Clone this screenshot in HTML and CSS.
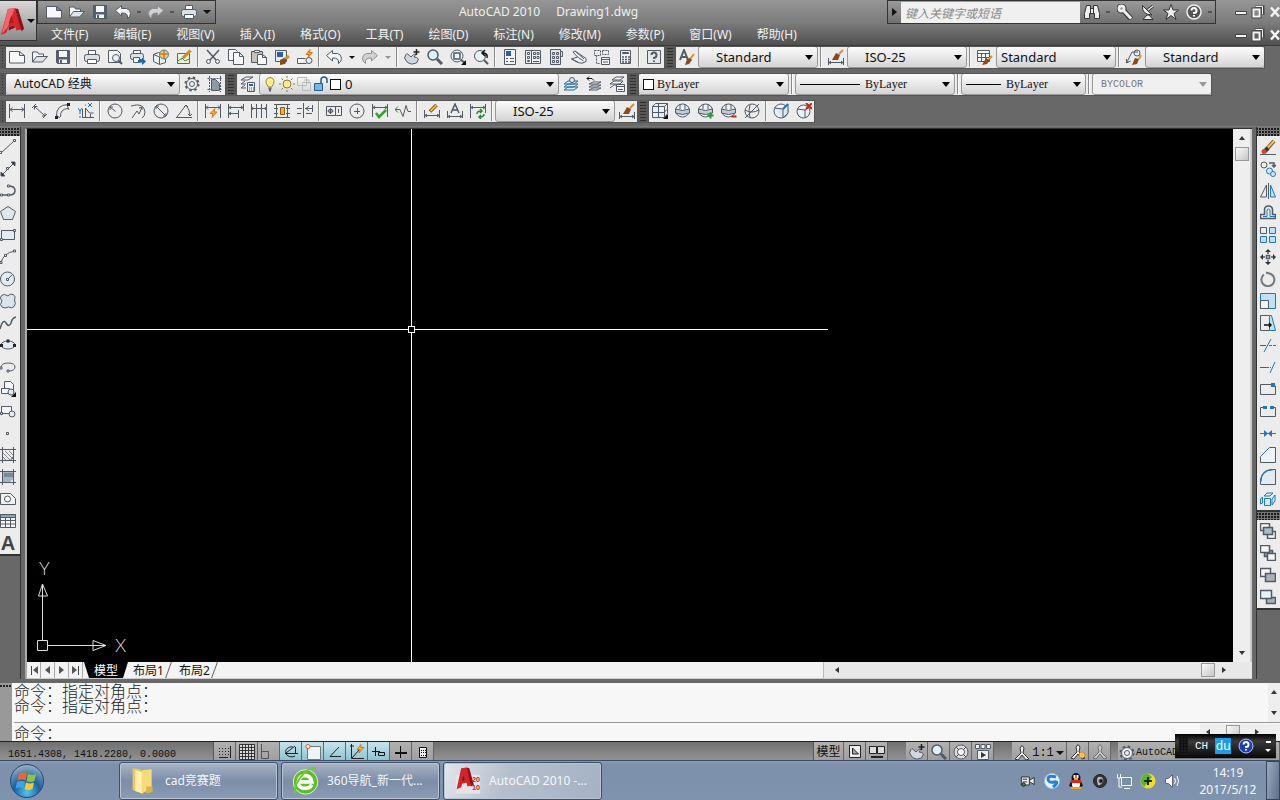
FILE: index.html
```html
<!DOCTYPE html>
<html lang="zh-CN">
<head>
<meta charset="utf-8">
<title>AutoCAD 2010 Drawing1.dwg</title>
<link rel="stylesheet" href="styles.css">
</head>
<body>
<svg class="sprite" aria-hidden="true">
  <symbol id="new" viewBox="0 0 16 16"><path fill="#f6f8fa" d="M.5 2.500h10l5 4v7.500H.5zM10.500 2.500v4h5"/></symbol>
  <symbol id="open" viewBox="0 0 16 16"><path fill="#f6f8fa" d="M.5 13V3h5l1 2h5v2.500"/><path fill="#dfe4ea" d="M.5 13l4-5.500h11l-5 5.500z"/></symbol>
  <symbol id="save" viewBox="0 0 16 16"><path fill="#566072" d="M1.500 1.500h13v13h-12l-1-1z"/><path fill="#f6f8fa" stroke="none" d="M4 2h8v6H4zM4 10.500h8V14H4z"/><path fill="#566072" stroke="none" d="M5 11h2v3H5z"/></symbol>
  <symbol id="print" viewBox="0 0 16 16"><path fill="#fff" d="M4.500 6V1.500h7V6"/><rect x=".5" y="5.500" width="15" height="7" rx="2" fill="#dde1e6"/><path fill="#fff" d="M3.500 10.500h9v4h-9z"/></symbol>
  <symbol id="preview" viewBox="0 0 16 16"><path fill="#f6f8fa" d="M1.500 1.500h9l3 3v9h-12z"/><circle cx="9" cy="9" r="3.500" fill="#e8f2fa"/><path stroke-width="2" d="M11.500 11.500l3.500 3.500"/></symbol>
  <symbol id="publish" viewBox="0 0 16 16"><path fill="#fff" d="M3.500 5V1.500h7V5"/><rect x=".5" y="4.500" width="13" height="6" rx="2" fill="#dde1e6"/><path fill="#fff" d="M3.500 8.500h6v5h-6z"/><path fill="#1566b8" stroke="none" d="M8 11h4V8.500l4 4-4 3.500v-2.500H8z"/></symbol>
  <symbol id="dwf" viewBox="0 0 16 16"><path fill="#eef3f7" d="M.5 5.500l5-2 7 2v8l-6 2-6-3zM.5 5.500l6 2.500v7"/><circle cx="11" cy="5.500" r="4.500" fill="#f2d24a" stroke="#3b83c4"/><path stroke="#d04f2a" d="M11 1v9M7 5h8"/></symbol>
  <symbol id="markup" viewBox="0 0 16 16"><path fill="#e9f2dc" stroke="#5f6b52" d="M1.500 4.500h12v10h-12z"/><path stroke="#4a9a38" d="M2 12l4-3 3 3 4-2"/><path stroke="#d28a22" stroke-width="3" d="M7 9l7.500-7.500"/><path d="M5.500 10.500l2-2"/></symbol>
  <symbol id="cut" viewBox="0 0 16 16"><path stroke-width="1.500" d="M2 1l9 10M14 1L5 11"/><circle cx="3.500" cy="12.500" r="2"/><circle cx="12.500" cy="12.500" r="2"/></symbol>
  <symbol id="copyclip" viewBox="0 0 16 16"><path fill="#f8f9fb" d="M5.500 11.500h-5V.5h7l2 2"/><path fill="#f8f9fb" d="M5.500 3.500h6l4 4v8h-10zM11.500 3.500v4h4"/></symbol>
  <symbol id="paste" viewBox="0 0 16 16"><path fill="#c9c3b8" d="M.5 2.500h11v11H.5z"/><path fill="#fff" d="M3.500 1.500h5v2h-5z"/><path fill="#f8f9fb" d="M6.500 5.500h5l4 3v7h-9zM11.500 5.500v3h4"/></symbol>
  <symbol id="match" viewBox="0 0 16 16"><path fill="#e8eef4" d="M1.500 1.500h11v11h-11z"/><path fill="#2c5f9d" stroke="none" d="M3 3h6v5H3z"/><path stroke="#d8902a" stroke-width="3" d="M11 10l4-3"/><path fill="#8a4a1c" stroke="none" d="M6 11l4-2 3 2-2 4-5 1z"/></symbol>
  <symbol id="blockedit" viewBox="0 0 16 16"><path fill="#f6f8fa" d="M.5 14.500v-5h8"/><circle cx="12" cy="11.500" r="3" fill="#e8eef4"/><path d="M.5 14.500h9"/><path fill="#f5a623" stroke="#d6771a" d="M13 .5l-4 5h3l-1 3 4.500-5h-3z"/></symbol>
  <symbol id="undo" viewBox="0 0 16 16"><path fill="#f4f6f8" d="M.5 6.500L6.500 1.500v3h5q4 1 4 5 0 3-3 5 1-6-6-5.500v3z"/></symbol>
  <symbol id="redo" viewBox="0 0 16 16"><path fill="#d0d2d4" stroke="#8c8f93" d="M15.500 6.500L9.500 1.500v3h-5q-4 1-4 5 0 3 3 5-1-6 6-5.500v3z"/></symbol>
  <symbol id="pan" viewBox="0 0 16 16"><path fill="#d0d7de" d="M2 5.500L.5 9l3 4.500q4 3 9 .500l2-4Q13 8 10 8L12 5 9.500 5.500 7 8 3 4.500z"/><path stroke="#222" stroke-width="1.500" d="M12.500 0v6M9.500 3h6"/></symbol>
  <symbol id="zoom" viewBox="0 0 16 16"><circle cx="6" cy="6" r="5" fill="#dff0f7" stroke-width="1.500"/><path stroke-width="3" d="M10 10l5 5"/></symbol>
  <symbol id="zoomwin" viewBox="0 0 16 16"><circle cx="7" cy="7" r="6" fill="#eaf3f8"/><path stroke-width="1.500" d="M4 4h6v6H4z"/><path stroke-width="2" d="M11 11l4 3"/><path fill="#111" stroke="none" d="M16 11v5h-5z"/></symbol>
  <symbol id="zoomprev" viewBox="0 0 16 16"><circle cx="7" cy="7" r="5.500" fill="#eaf3f8"/><path stroke-width="2" d="M11 11l4 4"/><path stroke="#111" stroke-width="1.500" d="M14 9q1-5-4-5M12 1L9 4l3 3"/></symbol>
  <symbol id="props" viewBox="0 0 16 16"><path fill="#eef2f5" d="M2.500.5h11v15h-11z"/><path fill="#2c5f9d" stroke="none" d="M4 2h5v5H4z"/><path d="M4 9.500h2M8 9.500h4M4 12.500h2M8 12.500h4"/></symbol>
  <symbol id="dc" viewBox="0 0 16 16"><path fill="#eef2f5" d="M.5 1.500h15v13H.5zM6.500 1.500v13"/><path d="M2.500 3.500h2v2h-2zM2.500 7.500h2v2h-2zM2.500 11.500h2v1h-2zM8.500 3.500h2v2h-2zM12 3.500h2v2h-2zM8.500 7.500h2v2h-2zM12 7.500h2v2h-2zM8 12.500h6"/></symbol>
  <symbol id="palette" viewBox="0 0 16 16"><path fill="#dfe5ea" d="M2.500.5h10v15h-10zM12.500 2.500h2v5h-2"/><path d="M4.500 3.500h2v2h-2zM8.500 3.500h2v2h-2zM4.500 7.500h2v2h-2zM8.500 7.500h2v2h-2zM4.500 11.500h2v2h-2zM8.500 11.500h2v2h-2z"/></symbol>
  <symbol id="sheet" viewBox="0 0 16 16"><path fill="#eef2f5" d="M.5 10l6-2L2 3l2-1 11 7.500v3q-4 3-8 1zM.5 10l6.500 3M6.500 8l6 4M4 2l9 8"/></symbol>
  <symbol id="msm" viewBox="0 0 16 16"><path stroke-dasharray="2 1" d="M.5 1.500h6v5h-6zM8.500 1.500h6v4h-6zM2.500 6.500v8h4"/><path fill="#f6f8fa" d="M7.500 8.500h8v7h-8zM7.500 10.500h8M9 13h5"/></symbol>
  <symbol id="calc" viewBox="0 0 16 16"><path fill="#eef2f5" d="M3.500 1.500h10v13h-10z"/><path fill="#566072" d="M5.500 3.500h6v1h-6z"/><path stroke-dasharray="2 1" stroke-width="1.500" d="M5 8h8M5 10.500h8M5 13h8"/></symbol>
  <symbol id="help" viewBox="0 0 16 16"><path fill="#e4e8ed" d="M1.500 1.500h13v13h-13z"/><path stroke-width="2" d="M5.500 6q0-2.500 2.500-2.500T10.500 6 8 9v1M8 11.500v1.500"/></symbol>
  <symbol id="tstyle" viewBox="0 0 16 16"><path stroke-width="2" d="M1 11L5 1l4 10M3 8h4"/><path stroke="#d8902a" stroke-width="2" d="M11 10l4-5"/><path fill="#8a4a1c" stroke="none" d="M8 10l3-1 2 2-3 4-4 1z"/></symbol>
  <symbol id="dstyle" viewBox="0 0 16 16"><path d="M.5 9v7M15.500 9v7M1 13.500h14M3 12l-2 1.500L3 15M13 12l2 1.500-2 1.500"/><path stroke="#d8902a" stroke-width="2" d="M11 5l4-4"/><path fill="#8a4a1c" stroke="none" d="M8 4l4 2-2 5H4z"/></symbol>
  <symbol id="tbstyle" viewBox="0 0 16 16"><path fill="#f8fafb" d="M.5 1.500h12v11H.5zM.5 4.500h12M.5 8.500h12M4.500 4v8M8.500 4v8"/><path stroke="#d8902a" stroke-width="2" d="M12 10l3-3"/><path fill="#8a4a1c" stroke="none" d="M9 9l4 2-3 4-5 1z"/></symbol>
  <symbol id="mlstyle" viewBox="0 0 16 16"><path d="M.5 14L6 3h6M.5 14l0-4M.5 14l4-2"/><circle cx="11" cy="4" r="3"/><path stroke="#d8902a" stroke-width="2" d="M13 10l2-4"/><path fill="#8a4a1c" stroke="none" d="M9 9l4 1-2 5-5 1z"/></symbol>
  <symbol id="gear" viewBox="0 0 16 16"><circle cx="8" cy="8" r="6.500" stroke-width="2" stroke-dasharray="2.500 2.600"/><circle cx="8" cy="8" r="5.500" fill="#eef0f2"/><circle cx="8" cy="8" r="2.500"/></symbol>
  <symbol id="wsave" viewBox="0 0 16 16"><path stroke-dasharray="2 1" d="M.5 2.500h15M.5 13.500h15M2.500 0v16M13.500 0v16"/><path fill="#8e99a5" d="M4.500 3.500h4l4 4v7h-8z"/></symbol>
  <symbol id="layers" viewBox="0 0 16 16"><path fill="#f4f6f8" d="M1 4l5-3h7L8 4zM1 8l4-3M1 12l4-3M1 8h5M1 12h5"/><path fill="#e8eef4" d="M7.500 6.500h7v9h-7z"/><path fill="#2c5f9d" stroke="none" d="M9 8h4v2H9z"/><path stroke-dasharray="1 1" d="M9 12h5M9 14h5"/></symbol>
  <symbol id="bulb" viewBox="0 0 16 16"><path fill="#ffee8a" stroke="#a08a30" d="M6.500 11Q3.500 8 4 4.500 5 1.500 8 1.500t4 3Q12.500 8 9.500 11z"/><path stroke="#666" stroke-width="2" d="M6.500 12.500h3M7 14.500h2"/></symbol>
  <symbol id="sun" viewBox="0 0 16 16"><circle cx="8" cy="8" r="4" fill="#ffe98a" stroke="#8a7a40"/><path stroke="#8a7a40" d="M8 0v2M8 14v2M0 8h2M14 8h2M2.500 2.500L4 4M12 12l1.500 1.500M2.500 13.500L4 12M12 4l1.500-1.500"/></symbol>
  <symbol id="vpfreeze" viewBox="0 0 16 16"><path stroke="#b8bcc0" d="M1.500 1.500h9v8h-9zM6.500 6.500h8v8h-8zM8 4h5v4"/></symbol>
  <symbol id="lock" viewBox="0 0 16 16"><path fill="#75b6e6" stroke="#265b8c" d="M1.500 7.500h8v7h-8z"/><path stroke="#265b8c" stroke-width="1.500" d="M8 7V4q0-3 3-3t3 3v3"/></symbol>
  <symbol id="laycur" viewBox="0 0 16 16"><path fill="#d5ecf8" stroke="#2a6ea6" d="M1 8l4-3h10l-4 3zM1 11l4-3h10l-4 3zM1 14l4-3h10l-4 3z"/><circle cx="9" cy="4" r="2.500" fill="#d5ecf8"/></symbol>
  <symbol id="layprev" viewBox="0 0 16 16"><path fill="#f4f6f8" d="M3 8l4-2h8l-4 2zM3 11l4-2h8l-4 2zM3 14l4-2h8l-4 2z"/><path stroke="#111" d="M1 2.500h5l2 2M3 .5l-2 2 2 2"/></symbol>
  <symbol id="laystate" viewBox="0 0 16 16"><path fill="#f4f6f8" d="M3 4l4-3h8l-4 3zM1 8l4-3h9l-3 3zM1 12l4-3h3"/><path fill="#f6f8fa" d="M7.500 8.500h8v7h-8zM7.500 10.500h8M9 13.500h5"/></symbol>
  <symbol id="dlin" viewBox="0 0 16 16"><path d="M.5 1v14M15.500 1v14M1 6.500h14M3.500 4.500l-2.500 2 2.500 2M12.500 4.500l2.500 2-2.500 2"/></symbol>
  <symbol id="dali" viewBox="0 0 16 16"><path d="M0 5l4-4M11 15l4-4M2.500 3.500L13 13M2.500 6.500v-3h3M13 10v3h-3"/></symbol>
  <symbol id="darc" viewBox="0 0 16 16"><path d="M1.500 13Q1 2 13 1.500M5.500 14Q5 6 13 5.500M1 12l4 3M12 2l2 5"/><path fill="#222" stroke="none" d="M0 13h3v3H0zM12 0h3v3h-3z"/></symbol>
  <symbol id="dord" viewBox="0 0 16 16"><path d="M4.500 6v9M4 14.500h12M7.500 14V5l4 5h4M12.500 14v-3"/><path stroke="#1677c8" d="M0 5l2 3 2-3M2 8v3M10 0l4 4M14 0l-4 4M1 14h2M7 2h1"/></symbol>
  <symbol id="drad" viewBox="0 0 16 16"><circle cx="8" cy="8" r="7"/><path d="M8.500 8.500L3 4M3 7V4h3"/></symbol>
  <symbol id="djog" viewBox="0 0 16 16"><path d="M1 3Q14-1 15 9q0 4-3 6M2 15l5-7 2 3 3-7M9 5l3-1v3"/></symbol>
  <symbol id="ddia" viewBox="0 0 16 16"><circle cx="8" cy="8" r="7"/><path d="M3 3l10 10M3 6V3h3M13 10v3h-3"/></symbol>
  <symbol id="dang" viewBox="0 0 16 16"><path d="M0 14.500h16M1 14L10 2M10 2q4 5 4 11M8 4l2-2 2 2M12 11l2 2 2-2"/></symbol>
  <symbol id="dquick" viewBox="0 0 16 16"><path d="M.5 1v14M15.500 1v14M1 4.500h14M3 2.500L1 4.500l2 2M13 2.500l2 2-2 2"/><path fill="#ffb02e" stroke="#d6771a" d="M10 5.500l-5 5h3l-1 4 5-5.500H9z"/></symbol>
  <symbol id="dbase" viewBox="0 0 16 16"><path d="M.5 1v14M1 4.500h14M15.500 1v7M1 10.500h9M10.500 7v8M3 3L1 4.500 3 6M3 9l-2 1.500L3 12M13 3l2 1.500L13 6"/></symbol>
  <symbol id="dcont" viewBox="0 0 16 16"><path d="M.5 1v14M5.500 1v14M10.500 1v14M15.500 1v14M1 5.500h15M2 4l-1 1.500L2 7M14 4l1 1.500L14 7"/></symbol>
  <symbol id="dspace" viewBox="0 0 16 16"><path d="M0 1.500h16M0 14.500h16M2.500 2v12M13.500 2v12M0 5.500h4M12 5.500h4M0 10.500h4M12 10.500h4"/><path fill="#ffb02e" stroke="#8a5a10" d="M6.500 4.500h4v7h-4z"/></symbol>
  <symbol id="dbreak" viewBox="0 0 16 16"><path d="M6.500 0v15M0 10.500h4M9 10.500h6M0 5.500h5M8 5.500h7M15.500 2v7M12 3l-3 2.500L12 8"/></symbol>
  <symbol id="tol" viewBox="0 0 16 16"><path d="M.5 3.500h15v9H.5zM9.500 3.500v9M12.500 6v4M1.500 8h6M4.500 5v6"/><circle cx="4.500" cy="8" r="2"/></symbol>
  <symbol id="cmark" viewBox="0 0 16 16"><circle cx="8" cy="8" r="7"/><path d="M5 8.500h6M8.500 5v6"/></symbol>
  <symbol id="inspect" viewBox="0 0 16 16"><path d="M.5 1v13M15.500 1v13M1 4.500h14M3 3L1 4.500 3 6M13 3l2 1.500L13 6"/><path stroke="#35a02e" stroke-width="2.500" d="M4 10l3 4 7-7"/></symbol>
  <symbol id="jogline" viewBox="0 0 16 16"><path d="M0 6.500h5l3 7 3-11 2 6h3M3 3.500l-3 3 3 3"/></symbol>
  <symbol id="dedit" viewBox="0 0 16 16"><path d="M.5 7v8M15.500 7v8M1 12.500h14M3 11l-2 1.500L3 14M13 11l2 1.500-2 1.500"/><path stroke="#7a4a10" stroke-width="3.500" d="M6 8.500L12.500 2"/><path stroke="#f3b33c" stroke-width="2" d="M6.500 8l6-6"/></symbol>
  <symbol id="dtedit" viewBox="0 0 16 16"><path d="M.5 8v7M15.500 8v7M1 13.500h14M3 12l-2 1.500L3 15M13 12l2 1.500-2 1.500"/><path stroke-width="1.500" d="M4 10l4-9 4 9M5.500 7h5"/></symbol>
  <symbol id="dupd" viewBox="0 0 16 16"><path d="M.5 1v14M15.500 1v9M1 4.500h14M3 3L1 4.500 3 6M13 3l2 1.500L13 6"/><path stroke="#278a32" stroke-width="1.500" d="M7 11q0-3 4-3M10 6l2 2-2 2M14 11q0 3-4 3M11 12l-2 2 2 2"/></symbol>
  <symbol id="box3" viewBox="0 0 16 16"><path fill="#eaf0f4" d="M.5 3.500l3-3h12v10l-3 4H.5zM.5 3.500h12v11M12.500 3.500l3-3M6.500 0v14M0 9.500h12l3-3"/><path fill="#111" stroke="none" d="M16 11v5h-5z"/></symbol>
  <symbol id="ball" viewBox="0 0 16 16"><ellipse cx="7.500" cy="7.500" rx="7" ry="6.500" fill="#eaf0f4"/><path fill="#c3ccd4" d="M.5 6q7 3 14 0v4q-7 3-14 0z"/><path d="M5 1.500v4.500M10 1.500v4.500"/></symbol>
  <symbol id="balladd" viewBox="0 0 16 16"><use href="#ball"/><path stroke="#1f9a28" stroke-width="2" d="M9.500 12.500h6M12.500 9.500v6"/></symbol>
  <symbol id="ballsub" viewBox="0 0 16 16"><use href="#ball"/><path stroke="#c8201a" stroke-width="2" d="M10.500 13.500h5"/></symbol>
  <symbol id="wire" viewBox="0 0 16 16"><circle cx="8" cy="8" r="7"/><path d="M1 7q7 4 14 0M6 1.500q-2 6 0 13M1 15L15 1"/></symbol>
  <symbol id="cubeball" viewBox="0 0 16 16"><circle cx="8" cy="8" r="7" fill="#eaf0f4"/><path fill="#d8e9f4" d="M1 5l9 1v9M10 6l5-5v9l-5 5"/><path stroke="#2076c0" stroke-width="2" d="M10 6l5-5"/></symbol>
  <symbol id="cubex" viewBox="0 0 16 16"><circle cx="7.500" cy="8.500" r="6.500" fill="#eaf0f4"/><path d="M1 6l8 1v8M9 7l5-3"/><path stroke="#d3201c" stroke-width="2" d="M10 0l6 6M16 0l-6 6"/></symbol>
  <symbol id="line" viewBox="0 0 16 16"><path d="M1 14L14 2"/><path fill="#eee" d="M-.5 12.500h2v2h-2zM13.500.5h2v2h-2z"/></symbol>
  <symbol id="xline" viewBox="0 0 16 16"><path d="M1 15L15 1"/><path fill="#222" d="M11 1h4v4zM1 11v4h4z"/><path fill="#eee" d="M6.500 6.500h2v2h-2z"/></symbol>
  <symbol id="pline" viewBox="0 0 16 16"><path stroke-width="1.500" d="M8 3q7 0 7 4.500T9 12H1"/><path fill="#eee" d="M7.500 2h2v2h-2zM.5 11h2v2h-2zM7.500 11h2v2h-2z"/></symbol>
  <symbol id="poly" viewBox="0 0 16 16"><path fill="#e0e7ee" d="M8 1.500l7.500 5-3 8h-9l-3-8z"/></symbol>
  <symbol id="rect" viewBox="0 0 16 16"><path fill="#e3ebf2" d="M1.500 3.500h13v9h-13z"/><path fill="#eee" d="M.5 11.500h2v2h-2zM13.500 2.500h2v2h-2z"/></symbol>
  <symbol id="arc" viewBox="0 0 16 16"><path d="M1 14Q3 4 15 2"/><path fill="#eee" d="M0 12.500h2v2H0zM4.500 5.500h2v2h-2zM13.500 1h2v2h-2z"/></symbol>
  <symbol id="circ" viewBox="0 0 16 16"><circle cx="7.500" cy="8" r="7" fill="#e3ebf2"/><path d="M8 8l4-4"/><path fill="#eee" d="M6.500 7.500h2v2h-2z"/></symbol>
  <symbol id="cloud" viewBox="0 0 16 16"><path fill="#dbe4ec" d="M8 3Q10 0 13 1.500T14.500 7Q16.500 11 14 13.500T8.500 14Q5 16 2 14T2 8Q-1 5 1.500 2.500T8 3z"/></symbol>
  <symbol id="spl" viewBox="0 0 16 16"><path stroke-width="1.500" d="M0 14Q3 3 6 8t5 0q1-5 5-6"/></symbol>
  <symbol id="ell" viewBox="0 0 16 16"><ellipse cx="8" cy="8" rx="7" ry="4" fill="#e3ebf2"/><path fill="#222" stroke="none" d="M0 7h3v3H0zM6.500 2.500h3v3h-3zM13 7h3v3h-3z"/></symbol>
  <symbol id="ella" viewBox="0 0 16 16"><path d="M1 9q0-5 7-5t7 4-7 4"/><path fill="#eee" d="M0 8h2v2H0zM7 11h2v2H7z"/></symbol>
  <symbol id="ins" viewBox="0 0 16 16"><path fill="#f6f8fa" d="M4.500 7V.5h6l3 3V12M1.500 7.500h8v5h-8z"/><circle cx="11" cy="11" r="3" fill="#e3ebf2"/><path fill="#111" stroke="none" d="M16 11v5h-5z"/></symbol>
  <symbol id="blk" viewBox="0 0 16 16"><path fill="#f6f8fa" d="M1.500 3.500h10v7h-10z"/><circle cx="12" cy="11" r="3" fill="#e3ebf2"/><path fill="#eee" d="M.5 9.500h2v2h-2z"/></symbol>
  <symbol id="pt" viewBox="0 0 16 16"><path d="M6.500 7.500h2v2h-2z"/></symbol>
  <symbol id="hatch" viewBox="0 0 16 16"><path d="M0 2.500h16M0 13.500h16M2.500 0v16M13.500 0v16"/><path stroke="#7d8691" d="M5 4l8 8M9 4l4 4M3 6l7 7M3 10l3 3"/><path d="M13 10l-3 4"/></symbol>
  <symbol id="grad" viewBox="0 0 16 16"><path d="M0 2.500h16M0 13.500h16M2.500 0v16M13.500 0v16"/><path fill="#a8b2be" stroke="none" d="M3 3h10v7l-3 3H3z"/><path fill="#7b8898" stroke="none" d="M4 4h9v4H4z"/></symbol>
  <symbol id="reg" viewBox="0 0 16 16"><path fill="#f0f4f7" d="M.5 2.500h10l5 5v6H.5z"/><circle cx="7.500" cy="8" r="3" fill="#fff"/></symbol>
  <symbol id="tbl" viewBox="0 0 16 16"><path fill="#f8fafb" d="M.5 1.500h15v13H.5zM.5 7.500h15M.5 11h15M5.500 4v10M10.500 4v10"/><path fill="#8fa3b7" d="M.5 1.500h15v3H.5z"/></symbol>
  <symbol id="erase" viewBox="0 0 16 16"><path d="M0 15.500h16"/><path stroke="#8a5a20" stroke-width="4" d="M6 11l8-9"/><path stroke="#efbe6a" stroke-width="2" d="M7 9.500L14 2"/><path stroke="#333" stroke-width="4" d="M5 12l3-3"/><circle cx="4" cy="12.500" r="2.500" fill="#d9481e" stroke="none"/></symbol>
  <symbol id="copy" viewBox="0 0 16 16"><circle cx="4" cy="4" r="3" fill="#eee"/><g fill="#d3ebfa" stroke="#2076c0"><circle cx="9.500" cy="10" r="3"/><circle cx="13" cy="13" r="2.500"/></g><path stroke-width="1.500" d="M9 2h5v4M12 4l2 2 2-2"/></symbol>
  <symbol id="mirror" viewBox="0 0 16 16"><path d="M6.500 2v12h-6z"/><path d="M8.500 0v16"/><path fill="#bfe2f8" stroke="#2076c0" d="M10.500 2v12h5z"/></symbol>
  <symbol id="offset" viewBox="0 0 16 16"><path stroke-width="1.500" d="M.5 13.500v-4h4V5q0-4 4-4t4 4v4.500h3v4z"/><path stroke="#2076c0" d="M3 11.500h4V6q0-2 1.500-2T10 6v5.500h5"/></symbol>
  <symbol id="array" viewBox="0 0 16 16"><path d="M.5.500h6v6h-6z"/><path fill="#bfe2f8" stroke="#2076c0" d="M9.500.500h6v6h-6zM.5 9.500h6v6h-6zM9.500 9.500h6v6h-6z"/></symbol>
  <symbol id="move" viewBox="0 0 16 16"><path stroke-width="1.500" d="M8 1v4M8 11v4M1 8h4M11 8h4M6.500 6.500h3v3h-3z"/><path fill="#333" stroke="none" d="M5 3l3-3 3 3zM5 13l3 3 3-3zM3 5L0 8l3 3zM13 5l3 3-3 3z"/></symbol>
  <symbol id="rotate" viewBox="0 0 16 16"><path stroke="#707880" stroke-width="2" d="M4 3.500a6.500 6.500 0 1 0 7-.500M11 3L6 1.500"/></symbol>
  <symbol id="scale" viewBox="0 0 16 16"><path fill="#bfe2f8" stroke="#2076c0" d="M.5.5h15v15H.5z"/><path fill="#f4f4f4" d="M.5 7.500h8v8h-8z"/></symbol>
  <symbol id="stretch" viewBox="0 0 16 16"><path d="M9.500 15.500h-9V.5h9"/><path fill="#bfe2f8" stroke="#2076c0" d="M9.500.5h2l4 15h-6z"/><path stroke="#111" stroke-width="1.500" d="M4 10h7M9 8l2 2-2 2"/></symbol>
  <symbol id="trim" viewBox="0 0 16 16"><path d="M0 8.500h6"/><path stroke="#2076c0" d="M4 15l7-13"/><path stroke="#2076c0" stroke-dasharray="3 1" d="M9 8.500h7"/></symbol>
  <symbol id="extend" viewBox="0 0 16 16"><path d="M0 8.500h6"/><path stroke="#2076c0" stroke-dasharray="3 1" d="M6 8.500h5"/><path stroke="#2076c0" d="M10 14l5-11"/></symbol>
  <symbol id="brkpt" viewBox="0 0 16 16"><path d="M15.500 5v8.500H.5v-10H12"/><path fill="#2076c0" stroke="none" d="M11 2h4v4h-4z"/></symbol>
  <symbol id="brk" viewBox="0 0 16 16"><path d="M4 4.500H.5v9h15v-9H12"/><path fill="#2076c0" stroke="none" d="M3 3h4v3H3zM10 3h4v3h-4z"/></symbol>
  <symbol id="join" viewBox="0 0 16 16"><path stroke="#2076c0" d="M0 8.500h16"/><path fill="#2076c0" stroke="none" d="M4 5l4 3.500L4 12zM12 5L8 8.500 12 12z"/></symbol>
  <symbol id="cham" viewBox="0 0 16 16"><path fill="#f0f4f7" d="M9.500.5h6v15H.5v-6"/><path stroke="#2076c0" d="M.5 9.500l9-9"/></symbol>
  <symbol id="fillet" viewBox="0 0 16 16"><path fill="#e3ebf2" d="M13 .5h2.500v15H.5V13Q1 1 13 .5z"/><path stroke="#2076c0" stroke-width="1.500" d="M.5 13Q1 1 13 .5"/></symbol>
  <symbol id="explode" viewBox="0 0 16 16"><path fill="#d3ebfa" stroke="#2076c0" d="M4.500 7.500h6v7h-6zM4 5l3-3h6l-3 3zM12 8l3-4v6l-3 4zM2.500 6L.5 8v5l2-1z"/></symbol>
  <symbol id="ord1" viewBox="0 0 16 16"><path fill="#f6f6f6" stroke-width="1.500" d="M.5.500h9v7h-9zM7.500 8.500h8v7h-8z"/><path fill="#a9bac8" stroke-width="1.500" d="M3.500 4.500h9v7h-9z"/></symbol>
  <symbol id="ord2" viewBox="0 0 16 16"><path fill="#8fa3b7" stroke-width="1.500" d="M4.500 5.500h8v6h-8z"/><path fill="#f6f6f6" stroke-width="1.500" d="M.5.500h9v7h-9zM7.500 8.500h8v7h-8z"/></symbol>
  <symbol id="ord3" viewBox="0 0 16 16"><path fill="#f6f6f6" stroke-width="1.500" d="M.5 1.500h10v8H.5z"/><path fill="#a9b0b6" stroke-width="1.500" d="M5.500 6.500h10v8h-10z"/></symbol>
  <symbol id="ord4" viewBox="0 0 16 16"><path fill="#a9b0b6" stroke-width="1.500" d="M6.500 8.500h9v6h-9z"/><path fill="#e8f2f8" stroke-width="1.500" d="M.5 1.500h11v8H.5z"/></symbol>
  <symbol id="bino" viewBox="0 0 16 16"><path fill="#eee" stroke="#333" d="M2.500 1.500h4v3h3v-3h4l2 8v5h-5v-5h-5v5h-5v-5zM6.500 4v6M9.500 4v6"/></symbol>
  <symbol id="key" viewBox="0 0 16 16"><circle cx="4.500" cy="4.500" r="3" stroke="#333" stroke-width="4"/><path stroke="#333" stroke-width="5" d="M7 7l7 8"/><circle cx="4.500" cy="4.500" r="2.500" stroke="#eee" stroke-width="3"/><path stroke="#eee" stroke-width="3" d="M6 6l8 8.500"/></symbol>
  <symbol id="dish" viewBox="0 0 16 16"><path fill="#eee" stroke="#333" d="M2.500 1.500q-1 9 9.500 9.500zM3 15.500h10l-4-4.500H7z"/><path stroke="#333" stroke-width="3" d="M8 6l5-4"/><path stroke="#eee" stroke-width="1.500" d="M8 6l5-4"/></symbol>
  <symbol id="star" viewBox="0 0 16 16"><path fill="#eee" stroke="#333" d="M8 .5l2 5.500h5.500L11 9.500l2 6-5-4-5 4 2-6L.5 6H6z"/></symbol>
  <symbol id="helpc" viewBox="0 0 16 16"><circle cx="8" cy="8" r="7" fill="#555" stroke="#eee" stroke-width="1.500"/><path stroke="#fff" stroke-width="2" d="M5.500 6.500q0-2.500 2.500-2.500t2.500 2.500T8 9v.8M8 11v1.500"/></symbol>
  <symbol id="min" viewBox="0 0 14 14"><path fill="#f4f4f4" stroke="#444" d="M1.500 6.500h11v3h-11z"/></symbol>
  <symbol id="max" viewBox="0 0 14 14"><path stroke="#444" stroke-width="3" d="M2 4h7v8H2zM4 2h8v8"/><path stroke="#f4f4f4" stroke-width="2" d="M2.500 4.500h6v7h-6z"/><path stroke="#f4f4f4" d="M4.500 1.500h7v8"/></symbol>
  <symbol id="close" viewBox="0 0 14 14"><path stroke="#f4f4f4" stroke-width="2.500" d="M3 2.500l8 9M11 2.500l-8 9"/></symbol>
  <symbol id="sdots" viewBox="0 0 16 16"><path stroke="#222" stroke-dasharray="1 2" d="M2 4.500h10M2 7.500h10M2 10.500h10"/><path stroke="#222" d="M13.500 2v12M2 13.500h9"/></symbol>
  <symbol id="sgrid" viewBox="0 0 16 16"><path fill="#ddd" stroke="#333" d="M.5.500h15v15H.5zM3.500 0v16M6.500 0v16M9.500 0v16M12.500 0v16M0 3.500h16M0 6.500h16M0 9.500h16M0 12.500h16"/></symbol>
  <symbol id="sortho" viewBox="0 0 16 16"><path stroke="#555" d="M.5 0v14.500h7v-7H1"/></symbol>
  <symbol id="spolar" viewBox="0 0 16 16"><path stroke="#222" d="M3 9l9-7M2 9.500h13M12.500 3v6M12 12a6 5 0 1 1-2-9"/></symbol>
  <symbol id="sosnap" viewBox="0 0 16 16"><path fill="#eef4f6" stroke="#777" d="M2.500 2.500h13v13h-13z"/><circle cx="3" cy="2.500" r="2" fill="#fff" stroke="#e0571a"/></symbol>
  <symbol id="sotrack" viewBox="0 0 16 16"><path stroke="#222" d="M12 3L3 12.500h11"/></symbol>
  <symbol id="sducs" viewBox="0 0 16 16"><path stroke="#222" d="M2.500 0v14.500H15M3 14l7-8M1 2h4"/><path fill="#ffb02e" stroke="#d6771a" d="M12 .5l-4 5h3l-1 3.500 5-5.500h-3z"/></symbol>
  <symbol id="sdyn" viewBox="0 0 16 16"><path stroke="#111" d="M1 7.500h8M4.500 3v9M7.500 8.500h6v3h-6z"/></symbol>
  <symbol id="slwt" viewBox="0 0 16 16"><path stroke="#111" d="M7.500 2v12"/><path stroke="#111" stroke-width="2" d="M2 9h12"/></symbol>
  <symbol id="sqp" viewBox="0 0 16 16"><path fill="#eee" stroke="#111" d="M4.500 3.500h7v10h-7z"/><path stroke="#111" stroke-dasharray="1 1" d="M6 6.500h5M6 8.500h5M6 11.500h5"/></symbol>
  <symbol id="smodel" viewBox="0 0 16 16"><path fill="#eee" stroke="#222" d="M2.500 1.500h11v12h-11zM5.500 4v6h6z"/></symbol>
  <symbol id="slay" viewBox="0 0 16 16"><path fill="#ddd" stroke="#222" d="M.5 2.500h7v7h-7zM8.500 2.500h7v7h-7z"/><path stroke="#222" stroke-width="2" d="M2 13h12"/></symbol>
  <symbol id="wheel" viewBox="0 0 16 16"><circle cx="8" cy="8" r="7" fill="#ddd"/><circle cx="8" cy="8" r="3.500" fill="#fff"/><path d="M3 3l3 3M13 3l-3 3M3 13l3-3M13 13l-3-3"/></symbol>
  <symbol id="motion" viewBox="0 0 16 16"><path fill="#eee" d="M.5.500h4v4h-4zM6 .5h4v4H6zM11.500.5h4v4h-4zM2.500 6.500h11v9h-11z"/><path fill="#333" stroke="none" d="M6 8l5 3-5 3z"/></symbol>
  <symbol id="ann" viewBox="0 0 16 16"><path fill="#eee" stroke="#333" d="M8 .5l2 2.500-1 5 6 6-3 1-4-5-4 5-3-1 6-6-1-5z"/></symbol>
  <symbol id="annsun" viewBox="0 0 16 16"><use href="#ann"/><circle cx="12" cy="11" r="3" fill="#ffc24a" stroke="#e08a20"/></symbol>
  <symbol id="logoA" viewBox="0 0 28 34"><path fill="#d9262b" stroke="none" d="M8 3l8-1 8 25-6 1-2-6-7 2-3 7-6 2z"/><path fill="#8d1117" stroke="none" d="M16 2l4 1 7 23-3 3zM9 24l7-2v3l-7 3z"/><path fill="#f3656a" stroke="none" d="M8 3l8-1-8 22-7 8z"/><path fill="#b01b20" stroke="none" d="M12 10l3 9-6 1z"/></symbol>
</svg>

<header class="titlebar">
  <button class="app" aria-label="应用程序菜单"><svg class="logo"><use href="#logoA"/></svg><i class="caret"></i></button>
  <div class="titlerows">
    <div class="titlerow">
      <div class="qat">
        <button aria-label="新建"><svg><use href="#new"/></svg></button><button aria-label="打开"><svg><use href="#open"/></svg></button><button aria-label="保存"><svg><use href="#save"/></svg></button><button aria-label="放弃"><svg><use href="#undo"/></svg></button><i class="tick"></i><button aria-label="重做"><svg><use href="#redo"/></svg></button><i class="tick"></i><button aria-label="打印"><svg><use href="#print"/></svg></button><button class="slim" aria-label="自定义"><i class="caret"></i></button>
      </div>
      <h1 class="title"><span>AutoCAD 2010</span><span>Drawing1.dwg</span></h1>
      <div class="info">
        <button class="slim" aria-label="展开"><i class="tri-r"></i></button>
        <input type="text" aria-label="搜索" placeholder="键入关键字或短语">
        <button aria-label="搜索"><svg><use href="#bino"/></svg></button><i class="tick"></i><button aria-label="速博"><svg><use href="#key"/></svg></button><button aria-label="通讯"><svg><use href="#dish"/></svg></button><button aria-label="收藏"><svg><use href="#star"/></svg></button><button aria-label="帮助"><svg><use href="#helpc"/></svg></button><i class="tick"></i>
      </div>
      <div class="winbtns"><button aria-label="最小化"><svg><use href="#min"/></svg></button><button aria-label="还原"><svg><use href="#max"/></svg></button><button aria-label="关闭"><svg><use href="#close"/></svg></button></div>
    </div>
    <div class="titlerow">
      <nav class="menu"><a href="#">文件(F)</a><a href="#">编辑(E)</a><a href="#">视图(V)</a><a href="#">插入(I)</a><a href="#">格式(O)</a><a href="#">工具(T)</a><a href="#">绘图(D)</a><a href="#">标注(N)</a><a href="#">修改(M)</a><a href="#">参数(P)</a><a href="#">窗口(W)</a><a href="#">帮助(H)</a></nav>
      <div class="winbtns"><button aria-label="最小化图形"><svg><use href="#min"/></svg></button><button aria-label="还原图形"><svg><use href="#max"/></svg></button><button aria-label="关闭图形"><svg><use href="#close"/></svg></button></div>
    </div>
  </div>
</header>

<section class="bars">
  <div class="barrow">
    <i class="grip edge"></i>
    <div class="bar">
      <button aria-label="新建"><svg><use href="#new"/></svg></button><button aria-label="打开"><svg><use href="#open"/></svg></button><button aria-label="保存"><svg><use href="#save"/></svg></button><i class="sep"></i>
      <button aria-label="打印"><svg><use href="#print"/></svg></button><button aria-label="打印预览"><svg><use href="#preview"/></svg></button><button aria-label="发布"><svg><use href="#publish"/></svg></button><button aria-label="三维DWF"><svg><use href="#dwf"/></svg></button><button aria-label="标记"><svg><use href="#markup"/></svg></button><i class="sep"></i>
      <button aria-label="剪切"><svg><use href="#cut"/></svg></button><button aria-label="复制"><svg><use href="#copyclip"/></svg></button><button aria-label="粘贴"><svg><use href="#paste"/></svg></button><button aria-label="特性匹配"><svg><use href="#match"/></svg></button><button aria-label="块编辑器"><svg><use href="#blockedit"/></svg></button><i class="sep"></i>
      <button aria-label="放弃"><svg><use href="#undo"/></svg></button><button class="drop" aria-label="放弃列表"><i class="caret small"></i></button><button aria-label="重做"><svg><use href="#redo"/></svg></button><button class="drop dim" aria-label="重做列表"><i class="caret small"></i></button><i class="sep"></i>
      <button aria-label="平移"><svg><use href="#pan"/></svg></button><button aria-label="缩放"><svg><use href="#zoom"/></svg></button><button aria-label="窗口缩放"><svg><use href="#zoomwin"/></svg></button><button aria-label="上一个"><svg><use href="#zoomprev"/></svg></button><i class="sep"></i>
      <button aria-label="特性"><svg><use href="#props"/></svg></button><button aria-label="设计中心"><svg><use href="#dc"/></svg></button><button aria-label="工具选项板"><svg><use href="#palette"/></svg></button><button aria-label="图纸集"><svg><use href="#sheet"/></svg></button><button aria-label="标记集"><svg><use href="#msm"/></svg></button><button aria-label="计算器"><svg><use href="#calc"/></svg></button><i class="sep"></i>
      <button aria-label="帮助"><svg><use href="#help"/></svg></button>
    </div>
    <i class="grip"></i>
    <div class="bar">
      <button aria-label="文字样式"><svg><use href="#tstyle"/></svg></button>
      <div class="combo w120 inset"><select aria-label="文字样式"><option>Standard</option></select></div><i class="sep"></i>
      <button aria-label="标注样式"><svg><use href="#dstyle"/></svg></button>
      <div class="combo w120 inset"><select aria-label="标注样式"><option>ISO-25</option></select></div><i class="sep"></i>
      <button aria-label="表格样式"><svg><use href="#tbstyle"/></svg></button>
      <div class="combo w120"><select aria-label="表格样式"><option>Standard</option></select></div><i class="sep"></i>
      <button aria-label="引线样式"><svg><use href="#mlstyle"/></svg></button>
      <div class="combo w120 inset"><select aria-label="引线样式"><option>Standard</option></select></div>
    </div>
  </div>
  <div class="barrow">
    <i class="grip edge"></i>
    <div class="bar">
      <div class="combo w175 ws"><select aria-label="工作空间"><option>AutoCAD 经典</option></select></div>
      <button aria-label="工作空间设置"><svg><use href="#gear"/></svg></button><button aria-label="我的工作空间"><svg><use href="#wsave"/></svg></button>
    </div>
    <i class="grip"></i>
    <div class="bar">
      <button aria-label="图层特性"><svg><use href="#layers"/></svg></button>
      <div class="combo w300"><svg><use href="#bulb"/></svg><svg><use href="#sun"/></svg><svg><use href="#vpfreeze"/></svg><svg><use href="#lock"/></svg><i class="swatch"></i><select aria-label="图层"><option>0</option></select></div>
      <button aria-label="置为当前"><svg><use href="#laycur"/></svg></button><button aria-label="上一个图层"><svg><use href="#layprev"/></svg></button><button aria-label="图层状态"><svg><use href="#laystate"/></svg></button>
    </div>
    <i class="grip"></i>
    <div class="bar">
      <div class="combo w150 serif"><i class="swatch"></i><select aria-label="颜色"><option>ByLayer</option></select></div><i class="sep"></i>
      <div class="combo w160 serif"><i class="rule long"></i><select aria-label="线型"><option>ByLayer</option></select></div><i class="sep"></i>
      <div class="combo w125 serif"><i class="rule"></i><select aria-label="线宽"><option>ByLayer</option></select></div><i class="sep"></i>
      <div class="combo w120 off"><select aria-label="打印样式" disabled><option>BYCOLOR</option></select></div>
    </div>
  </div>
  <div class="barrow">
    <i class="grip edge"></i>
    <div class="bar">
      <button aria-label="线性"><svg><use href="#dlin"/></svg></button><button aria-label="对齐"><svg><use href="#dali"/></svg></button><button aria-label="弧长"><svg><use href="#darc"/></svg></button><button aria-label="坐标"><svg><use href="#dord"/></svg></button><i class="sep"></i>
      <button aria-label="半径"><svg><use href="#drad"/></svg></button><button aria-label="折弯"><svg><use href="#djog"/></svg></button><button aria-label="直径"><svg><use href="#ddia"/></svg></button><button aria-label="角度"><svg><use href="#dang"/></svg></button><i class="sep"></i>
      <button aria-label="快速标注"><svg><use href="#dquick"/></svg></button><button aria-label="基线"><svg><use href="#dbase"/></svg></button><button aria-label="连续"><svg><use href="#dcont"/></svg></button><button aria-label="等距标注"><svg><use href="#dspace"/></svg></button><button aria-label="折断标注"><svg><use href="#dbreak"/></svg></button><i class="sep"></i>
      <button aria-label="公差"><svg><use href="#tol"/></svg></button><button aria-label="圆心标记"><svg><use href="#cmark"/></svg></button><button aria-label="检验"><svg><use href="#inspect"/></svg></button><button aria-label="折弯线性"><svg><use href="#jogline"/></svg></button><i class="sep"></i>
      <button aria-label="编辑标注"><svg><use href="#dedit"/></svg></button><button aria-label="编辑标注文字"><svg><use href="#dtedit"/></svg></button><button aria-label="标注更新"><svg><use href="#dupd"/></svg></button><i class="sep"></i>
      <div class="combo w120 inset"><select aria-label="标注样式控制"><option>ISO-25</option></select></div>
      <button aria-label="标注样式"><svg><use href="#dstyle"/></svg></button>
    </div>
    <i class="grip"></i>
    <div class="bar">
      <button aria-label="长方体"><svg><use href="#box3"/></svg></button><button aria-label="网格"><svg><use href="#ball"/></svg></button><button aria-label="增加平滑"><svg><use href="#balladd"/></svg></button><button aria-label="减少平滑"><svg><use href="#ballsub"/></svg></button><button aria-label="优化"><svg><use href="#wire"/></svg></button><i class="sep"></i>
      <button aria-label="锐化"><svg><use href="#cubeball"/></svg></button><button aria-label="取消锐化"><svg><use href="#cubex"/></svg></button>
    </div>
  </div>
</section>

<main class="work">
  <aside class="side left">
    <i class="hgrip"></i>
    <div class="tools"><button aria-label="直线"><svg><use href="#line"/></svg></button><button aria-label="构造线"><svg><use href="#xline"/></svg></button><button aria-label="多段线"><svg><use href="#pline"/></svg></button><button aria-label="正多边形"><svg><use href="#poly"/></svg></button><button aria-label="矩形"><svg><use href="#rect"/></svg></button><button aria-label="圆弧"><svg><use href="#arc"/></svg></button><button aria-label="圆"><svg><use href="#circ"/></svg></button><button aria-label="修订云线"><svg><use href="#cloud"/></svg></button><button aria-label="样条曲线"><svg><use href="#spl"/></svg></button><button aria-label="椭圆"><svg><use href="#ell"/></svg></button><button aria-label="椭圆弧"><svg><use href="#ella"/></svg></button><button aria-label="插入块"><svg><use href="#ins"/></svg></button><button aria-label="创建块"><svg><use href="#blk"/></svg></button><button aria-label="点"><svg><use href="#pt"/></svg></button><button aria-label="图案填充"><svg><use href="#hatch"/></svg></button><button aria-label="渐变色"><svg><use href="#grad"/></svg></button><button aria-label="面域"><svg><use href="#reg"/></svg></button><button aria-label="表格"><svg><use href="#tbl"/></svg></button><button class="letter">A</button></div>
  </aside>
  <section class="doc">
    <div class="view">
      <div class="canvas">
        <svg class="cross" shape-rendering="crispEdges" aria-hidden="true">
          <path d="M0 200.500h801M384.500 0v197M384.500 204v2000"/><path class="pick" d="M381.500 197.500h6v6h-6z"/>
        </svg>
        <svg class="ucs" viewBox="0 0 110 100">
          <path d="M10.500 82.500h10v10h-10zM15.500 82V27M21 87.500h54"/><path d="M15.500 26l-4 12h9zM15.500 26v12M79 87.500l-13-5v10zM79 87.500H66"/>
          <text x="12" y="17">Y</text><text x="88" y="94">X</text>
        </svg>
      </div>
      <div class="vscroll"><button aria-label="上滚"><i class="tri-u"></i></button><i class="thumb"></i><span class="fill"></span><button aria-label="下滚"><i class="tri-d"></i></button></div>
    </div>
    <div class="tabs">
      <button class="nav" aria-label="第一个"><i class="bar1"></i><i class="tri-l"></i></button><button class="nav" aria-label="前一个"><i class="tri-l"></i></button><button class="nav" aria-label="后一个"><i class="tri-r"></i></button><button class="nav" aria-label="最后一个"><i class="tri-r"></i><i class="bar1"></i></button>
      <button class="tab on">模型</button><button class="tab">布局1</button><button class="tab">布局2</button>
      <span class="fill"></span>
      <div class="hscroll"><button aria-label="左滚"><i class="tri-l"></i></button><span class="fill"></span><i class="thumb"></i><button aria-label="右滚"><i class="tri-r"></i></button></div>
    </div>
  </section>
  <aside class="side right">
    <i class="hgrip"></i>
    <div class="tools"><button aria-label="删除"><svg><use href="#erase"/></svg></button><button aria-label="复制"><svg><use href="#copy"/></svg></button><button aria-label="镜像"><svg><use href="#mirror"/></svg></button><button aria-label="偏移"><svg><use href="#offset"/></svg></button><button aria-label="阵列"><svg><use href="#array"/></svg></button><button aria-label="移动"><svg><use href="#move"/></svg></button><button aria-label="旋转"><svg><use href="#rotate"/></svg></button><button aria-label="缩放"><svg><use href="#scale"/></svg></button><button aria-label="拉伸"><svg><use href="#stretch"/></svg></button><button aria-label="修剪"><svg><use href="#trim"/></svg></button><button aria-label="延伸"><svg><use href="#extend"/></svg></button><button aria-label="打断于点"><svg><use href="#brkpt"/></svg></button><button aria-label="打断"><svg><use href="#brk"/></svg></button><button aria-label="合并"><svg><use href="#join"/></svg></button><button aria-label="倒角"><svg><use href="#cham"/></svg></button><button aria-label="圆角"><svg><use href="#fillet"/></svg></button><button aria-label="分解"><svg><use href="#explode"/></svg></button></div>
    <i class="hgrip"></i>
    <div class="tools"><button aria-label="前置"><svg><use href="#ord1"/></svg></button><button aria-label="后置"><svg><use href="#ord2"/></svg></button><button aria-label="置于上"><svg><use href="#ord3"/></svg></button><button aria-label="置于下"><svg><use href="#ord4"/></svg></button></div>
  </aside>
</main>

<section class="command">
  <i class="cmdgrip"></i>
  <div class="cmdbody">
    <div class="history"><div><p>命令：指定对角点：</p><p>命令：指定对角点：</p></div><span class="hv"><i class="tri-u"></i><i class="tri-d"></i></span></div>
    <div class="prompt"><label for="cmd">命令：</label><input id="cmd" type="text"><span class="ph"><i class="tri-l"></i><i class="thumb"></i><i class="tri-r"></i></span></div>
  </div>
</section>

<footer class="status">
  <span class="coords">1651.4308, 1418.2280, 0.0000</span>
  <button aria-label="捕捉"><svg><use href="#sdots"/></svg></button><button aria-label="栅格"><svg><use href="#sgrid"/></svg></button><button aria-label="正交"><svg><use href="#sortho"/></svg></button><button class="lit" aria-label="极轴"><svg><use href="#spolar"/></svg></button><button class="lit" aria-label="对象捕捉"><svg><use href="#sosnap"/></svg></button><button class="lit" aria-label="对象追踪"><svg><use href="#sotrack"/></svg></button><button class="lit" aria-label="DUCS"><svg><use href="#sducs"/></svg></button><button class="lit" aria-label="DYN"><svg><use href="#sdyn"/></svg></button><button aria-label="线宽"><svg><use href="#slwt"/></svg></button><button aria-label="快捷特性"><svg><use href="#sqp"/></svg></button>
  <span class="fill"></span>
  <button class="txt model">模型</button><button aria-label="模型空间"><svg><use href="#smodel"/></svg></button><button aria-label="快速查看布局"><svg><use href="#slay"/></svg></button><i class="gap"></i>
  <button aria-label="平移"><svg><use href="#pan"/></svg></button><button aria-label="缩放"><svg><use href="#zoom"/></svg></button><button aria-label="控制盘"><svg><use href="#wheel"/></svg></button><button aria-label="运动"><svg><use href="#motion"/></svg></button><i class="gap"></i>
  <button class="txt scalebtn"><svg><use href="#ann"/></svg>1:1<i class="caret"></i></button><button aria-label="注释可见性"><svg><use href="#annsun"/></svg></button><button class="faded" aria-label="自动添加比例"><svg><use href="#ann"/></svg></button><i class="gap thin"></i>
  <button class="txt wsbtn"><svg><use href="#gear"/></svg>AutoCAD 经典</button>
  <div class="ime"><i class="hgrip"></i><span>CH</span><b>du</b><svg viewBox="0 0 16 16"><circle cx="8" cy="8" r="7" fill="#1c3fb8" stroke="#bcc8f0"/><path stroke="#fff" stroke-width="2" d="M5.500 6.500q0-2.500 2.500-2.500t2.500 2.500T8 9v.8M8 11v1.500"/></svg><em><i class="dash"></i><i class="caret"></i></em></div>
</footer>

<nav class="taskbar">
  <button class="start" aria-label="开始"><svg viewBox="0 0 36 36"><defs><radialGradient id="orb" cx=".5" cy=".85" r=".8"><stop offset="0" stop-color="#4cc9f5"/><stop offset=".5" stop-color="#1d5f9e"/><stop offset="1" stop-color="#8fa9c4"/></radialGradient></defs><circle cx="18" cy="18" r="16.500" fill="url(#orb)" stroke="#27496e"/><g stroke="none"><path fill="#f0642a" d="M10 11q4-2.500 8-.5l-1.500 7q-4-2-8 0z"/><path fill="#8cc63e" d="M19 11q4 2 8 0l-1.500 7q-4 2-8 0z"/><path fill="#39a5e8" d="M8 19q4-2 8 0l-1.500 6.500q-4-2-8 0z"/><path fill="#fdc62e" d="M17 19.500q4 2 8 0L23.500 26q-4 2-8 0z"/></g></svg></button>
  <button class="task"><svg viewBox="0 0 32 32"><g stroke="none"><path fill="#e9c95c" d="M4 2l9 1v26l-9-3z"/><path fill="#fff0ab" d="M7 4l8 2v24l-8-3z"/><path fill="#f4db7c" d="M14 4l11-1v21l-11 6z"/><path fill="#d9b548" d="M19 22h7v6l-7 2z"/></g></svg><span>cad竞赛题</span></button>
  <button class="task"><svg viewBox="0 0 32 32"><circle cx="16" cy="17" r="13.500" fill="#5cc11f" stroke="#eaf7df"/><path stroke="#fff" stroke-width="4" d="M8 17h15q-1-7-7.500-7T8 17q0 7 8 7 5 0 7-4"/><path stroke="#68cf28" stroke-width="2" d="M5 31Q2 22 12 10 24-2 27 3"/></svg><span>360导航_新一代...</span></button>
  <button class="task on"><svg viewBox="0 0 32 32"><path fill="#e4e4e6" stroke="none" d="M3 9h27v21H3z"/><path fill="#d3242a" stroke="none" d="M9 2l6-1 6 20-5 1-1-4-5 1-1 4-5 2z"/><path fill="#8d1117" stroke="none" d="M15 1l3 1 5 18-3 2zM11 10l2 5-3 1z"/><text x="21" y="17">20</text><text x="21" y="26">10</text></svg><span>AutoCAD 2010 -...</span></button>
  <span class="fill"></span>
  <div class="tray">
    <svg viewBox="0 0 18 16"><path fill="#eee" stroke="#222" d="M1.500 3.500h9v9h-9zM11 7l5-3v8l-5-3M3 6h5M3 9h5"/><circle cx="4" cy="12" r="2" fill="#3a7d4a" stroke="#222"/></svg>
    <svg viewBox="0 0 16 16"><circle cx="8" cy="8" r="7.500" fill="#e8f4fd" stroke="#9fc4e4"/><path stroke="#2580d8" stroke-width="3" d="M12 4Q4 2 4 6t6 3-1 5"/></svg>
    <svg viewBox="0 0 16 16"><g stroke="none"><ellipse cx="8" cy="5" rx="4.500" ry="5" fill="#151515"/><path fill="#151515" d="M3 8L1 13l3 1h8l3-1-2-5z"/><ellipse cx="8" cy="11.500" rx="4" ry="4" fill="#fff"/><path fill="#e2231a" d="M3 7h10v3H3z"/><path fill="#f6a31b" d="M3 14h10v2H3zM6 5h4v2H6z"/><path fill="#fff" d="M5.500 2h2v3h-2zM8.500 2h2v3h-2z"/></g></svg>
    <svg viewBox="0 0 16 16"><circle cx="8" cy="8" r="6.500" fill="#333" stroke="#222"/><path fill="#bbb" stroke="none" d="M5 8q0-5 4-4 3 1 2 5-2 4-5 3z"/><circle cx="9" cy="8" r="2" fill="#111"/></svg>
    <svg viewBox="0 0 16 16"><path fill="#7c8fa8" stroke="#fff" d="M5.500 4.500h10v8h-10zM8 15.500h6M1.500 1v4h3V1M3 5v9h3"/></svg>
    <svg viewBox="0 0 16 16"><circle cx="8" cy="8" r="7.500" fill="#f2dc20" stroke="none"/><path fill="#54b82c" stroke="none" d="M8 .5a7.500 7.500 0 0 0-4 13.500L12 4z"/><path stroke="#222" stroke-width="2" d="M4 8h8M8 4v8"/></svg>
    <svg viewBox="0 0 16 16"><path fill="#fff" stroke="#667" d="M1.500 5.500h3l4-4v13l-4-4h-3z"/><path stroke="#fff" d="M10.500 5q2 3 0 6M13 3q3 5 0 10"/></svg>
  </div>
  <div class="clock"><time>14:19</time><time>2017/5/12</time></div>
  <button class="peek" aria-label="显示桌面"></button>
</nav>
</body>
</html>
```
FILE: styles.css
```css
* { box-sizing: border-box; }
body {
  margin: 0;
  min-height: 100vh;
  display: flex;
  flex-direction: column;
  overflow: hidden;
  background: #686868;
  font: 12px/16px "Noto Sans", "Noto Sans CJK SC", sans-serif;
  color: #111;
}
.sprite { display: none; }
i { font-style: normal; flex: none; }
svg { fill: none; stroke: #525a66; flex: none; width: 16px; height: 16px; display: block; }
button {
  margin: 0; padding: 0; border: 0; background: none; font: inherit; color: inherit;
  display: flex; align-items: center; justify-content: center; flex: none;
}
.fill { flex: 1; }

/* small marks */
.caret { border: 4px solid transparent; border-top: 4px solid #111; border-bottom: 0; }
.caret.small { border-width: 3px 3px 0; }
.tick { width: 4px; height: 2px; background: #555; margin: 0 3px; }
.tri-l, .tri-r, .tri-u, .tri-d { border: 3px solid transparent; }
.tri-l { border-right: 4px solid #333; border-left: 0; }
.tri-r { border-left: 4px solid #333; border-right: 0; }
.tri-u { border-bottom: 4px solid #333; border-top: 0; }
.tri-d { border-top: 4px solid #333; border-bottom: 0; }

/* title and menu */
.titlebar { display: flex; height: 46px; background: linear-gradient(#969696, #7c7c7c 50%, #505050); border-bottom: 1px solid #3b3b3b; }
.app { width: 37px; height: 41px; gap: 2px; background: linear-gradient(#d8d8d8, #8b8b8b); border: 1px solid #333; border-left: 0; }
.logo { width: 24px; height: 34px; }
.titlerows { flex: 1; display: flex; flex-direction: column; min-width: 0; }
.titlerow { display: flex; align-items: center; height: 24px; }
.titlerow + .titlerow { height: 22px; }
.qat, .info { display: flex; align-items: center; height: 24px; border: 1px solid #333; background: linear-gradient(#9a9a9a, #707070); }
.qat { padding: 0 2px 0 4px; }
.qat button, .info button { width: 23px; height: 22px; }
.qat .slim, .info .slim { width: 13px; }
.title { flex: 1; display: flex; justify-content: center; gap: 16px; margin: 0; padding-right: 6px; font-size: 12px; font-weight: 400; color: #f0f0f0; white-space: nowrap; }
.info .tri-r { border-width: 4px 0 4px 5px; border-left-color: #111; }
.info input { width: 179px; height: 21px; border: 0; padding: 2px 4px 0; background: #f0f0f0; font: italic 12px "Noto Sans", "Noto Sans CJK SC", sans-serif; }
.info input::placeholder { color: #888; opacity: 1; }
.winbtns { display: flex; width: 64px; gap: 2px; padding-left: 17px; }
.winbtns button { width: 15px; height: 20px; }
.winbtns svg { width: 14px; height: 14px; }
.titlerow + .titlerow .winbtns { margin-left: auto; }
.menu { display: flex; gap: 25px; padding-left: 14px; }
.menu a { color: #f0f0f0; text-decoration: none; white-space: nowrap; }

/* toolbars */
.bars { display: flex; flex-direction: column; gap: 4px; padding-bottom: 3px; border-bottom: 1px solid #777; }
.barrow { display: flex; height: 23px; }
.bar { display: flex; align-items: center; background: #ececec; border-bottom: 1px solid #333; outline: 1px solid #555; outline-offset: -1px; }
.bar > button { width: 23px; height: 22px; }
.bar > .drop { width: 13px; }
.dim { opacity: .4; }
.sep { width: 2px; height: 20px; margin: 0 2px; border-left: 1px solid #888; border-right: 1px solid #fafafa; }
.grip { width: 10px; background: linear-gradient(#303030 1px, transparent 1px) 0 0 / 3px 3px, #585858; border: 2px solid #585858; }
.grip.edge { width: 5px; }
.combo { display: flex; align-items: center; height: 22px; padding: 0 4px; border: 1px solid #999; border-radius: 3px; background: linear-gradient(#fcfcfc, #e8e8e8 50%, #d4d4d4); font-size: 13px; }
.combo::after { content: ""; border: 4px solid transparent; border-top: 5px solid #000; border-bottom: 0; }
.combo select { flex: 1; min-width: 0; height: 20px; padding: 0; border: 0; background: none; appearance: none; font: inherit; color: #111; opacity: 1; }
.combo.inset { padding-left: 17px; }
.combo.ws { font-size: 12px; padding-left: 8px; }
.w120 { width: 120px; }
.w125 { width: 125px; }
.w150 { width: 151px; }
.w160 { width: 160px; }
.w175 { width: 175px; }
.w300 { width: 300px; }
.combo.w300 { padding-left: 2px; gap: 1px; }
.combo.serif { font: 12px "Liberation Serif", serif; }
.combo.off { background: #f0f0f0; font: 10px "Liberation Mono", monospace; padding-left: 8px; }
.combo.off select { color: #777; }
.combo.off::after { border-top-color: #999; }
.swatch { width: 11px; height: 11px; border: 1px solid #111; background: #fff; margin-right: 3px; }
.rule { width: 35px; height: 1px; background: #000; margin-right: 5px; }
.rule.long { width: 60px; }

/* work area */
.work { flex: 1; display: flex; min-height: 0; }
.side { display: flex; flex-direction: column; }
.hgrip { height: 9px; background: radial-gradient(circle at 1px 1px, #1c1c1c 1px, transparent 1px) 2px 1px / 3px 3px, #777; }
.side .tools { background: #ececec; border-bottom: 2px solid #333; }
.side button { width: 16px; height: 22px; }
.side.left { width: 21px; border-right: 1px solid #333; margin-right: 4px; }
.side.right { width: 24px; border-left: 1px solid #333; margin-left: 4px; }
.side.right .tools { padding-left: 3px; }
.side.right .hgrip + .tools + .hgrip { height: 8px; }
.side.left .tools, .side.right .tools { flex: none; }
.letter { font: bold 20px "Liberation Sans", sans-serif; color: #444; }
.doc { flex: 1; display: flex; flex-direction: column; min-width: 0; margin-top: 1px; border-left: 2px solid #aaa; border-top: 1px solid #333; }
.view { flex: 1; display: flex; }
.canvas { flex: 1; position: relative; background: #000; overflow: hidden; }
.cross { position: absolute; left: 0; top: 0; width: 100%; height: 100%; stroke: #fff; }
.pick { fill: #000; }
.ucs { position: absolute; left: 0; bottom: 4px; width: 110px; height: 100px; stroke: #ddd; overflow: visible; }
.ucs text { font: 300 18px Lato, "Liberation Sans", sans-serif; fill: #ddd; stroke: none; }
.vscroll { width: 19px; display: flex; flex-direction: column; align-items: center; background: #eee; border-right: 2px solid #ccc; }
.vscroll button { width: 16px; height: 18px; }
.thumb { width: 14px; height: 14px; background: linear-gradient(135deg, #fafafa, #c6c6c6); border: 1px solid #999; }
.tabs { display: flex; height: 17px; background: #f3f3f3; border-bottom: 1px solid #ccc; }
.nav { width: 14px; border-right: 1px solid #aaa; }
.nav .tri-l { border-width: 4px 5px 4px 0; border-right-color: #555; }
.nav .tri-r { border-width: 4px 0 4px 5px; border-left-color: #555; }
.bar1 { width: 1px; height: 9px; background: #444; margin: 0 1px; }
.tab { padding: 2px 8px 0; margin-right: -1px; background: linear-gradient(110deg, transparent calc(100% - 7px), #666 calc(100% - 6px), transparent calc(100% - 5px)); }
.tab.on { width: 44px; margin: 0 0 0 1px; color: #fff; background: #000; clip-path: polygon(0 0, 100% 0, calc(100% - 5px) 100%, 5px 100%); }
.tab.on + .tab { padding-left: 5px; }
.hscroll { width: 429px; display: flex; align-items: center; border-left: 1px solid #bbb; background: #e8e8e8; padding: 0 19px 0 4px; }
.hscroll button { width: 18px; }

/* command window */
.command { display: flex; height: 59px; margin-top: 4px; border-bottom: 1px solid #222; background: #f7f7f7; }
.cmdgrip { width: 12px; background: radial-gradient(circle at 1px 1px, #222 1px, transparent 1px) 0 2px / 3px 3px repeat-x, #999; }
.cmdbody { flex: 1; padding-left: 2px; font: 15px/16px "Noto Sans CJK SC", sans-serif; color: #222; }
.cmdbody p { margin: 0; }
.cmdbody p, .cmdbody label { font-size: 16px; font-weight: 300; }
.cmdbody p { line-height: 16px; }
.cmdbody p:first-child { line-height: 14px; }
.history { display: flex; justify-content: space-between; height: 40px; border-bottom: 1px solid #999; }
.hv { width: 12px; display: flex; flex-direction: column; align-items: center; justify-content: space-between; padding: 7px 0; background: #eee; }
.prompt { display: flex; align-items: center; height: 18px; }
.prompt input { flex: 1; border: 0; padding: 0; height: 16px; background: none; font: inherit; outline: 0; }
.ph { width: 80px; height: 17px; display: flex; align-items: center; justify-content: space-between; padding: 0 21px 0 6px; background: #eee; }

/* status bar */
.status { position: relative; display: flex; height: 18px; background: linear-gradient(#707070, #929292); font: 10px/18px "Liberation Mono", "Noto Sans CJK SC", monospace; }
.coords { width: 214px; padding: 4px 0 0 8px; border-right: 1px solid #555; white-space: nowrap; }
.status button { width: 22px; height: 18px; overflow: hidden; padding-top: 2px; border-right: 1px solid #666; background: linear-gradient(#b0b0b0, #a0a0a0); white-space: nowrap; }
.status .lit { background: linear-gradient(#c6e4ec, #8fc3d0); }
.status .txt { gap: 4px; padding-top: 3px; }
.status .model { width: 31px; font-size: 12px; border-left: 1px solid #555; }
.status .scalebtn { width: 55px; font: 12px "Liberation Mono", monospace; gap: 2px; }
.status .wsbtn { width: 162px; justify-content: flex-start; padding-left: 1px; gap: 1px; }
.status .faded svg { opacity: .5; }
.gap { width: 18px; }
.gap.thin { width: 7px; }
.ime { position: absolute; right: 4px; bottom: 1px; width: 101px; height: 25px; display: flex; align-items: center; gap: 7px; padding-left: 4px; color: #fff; background: linear-gradient(#000, #3a3a3a 30%, #080808); border-bottom: 1px solid #777; font-size: 11px; }
.ime .hgrip { width: 9px; height: 18px; background-color: #111; }
.ime b { width: 16px; height: 16px; background: #1b9df0; font: 12px/15px "Noto Sans", sans-serif; text-align: center; }
.ime em { display: flex; flex-direction: column; gap: 6px; align-items: center; margin-left: 4px; }
.ime .caret { border-top-color: #fff; border-width: 3px 3px 0; }
.dash { width: 5px; height: 2px; background: #fff; }

/* taskbar */
.taskbar { display: flex; align-items: center; height: 40px; padding-left: 9px; gap: 3px; background: linear-gradient(#8c9bb3, #7d90ab 10%, #8093ae); border-top: 1px solid #3b4d66; color: #f4f7fa; }
.start { width: 36px; margin-right: 71px; }
.start svg { width: 36px; height: 36px; }
.task { width: 159px; height: 38px; justify-content: flex-start; gap: 7px; padding-left: 9px; border: 1px solid #3f506a; border-radius: 3px; box-shadow: inset 0 0 0 1px #b9c5d4; background: linear-gradient(#a9b5c6, #7c8da8 50%, #8a9bb5); }
.task svg { width: 29px; height: 30px; }
.task svg text { font: bold 8px "Liberation Sans", sans-serif; fill: #c8202a; stroke: none; }
.task.on { background: linear-gradient(110deg, #e2e6ec, #b4bfcd 40%, #a5b2c4); }
.tray { display: flex; gap: 8px; margin-right: 10px; }
.clock { display: flex; flex-direction: column; align-items: center; width: 70px; line-height: 17px; }
.peek { width: 14px; height: 39px; border: 1px solid #38465c; background: linear-gradient(100deg, #9aabc0, #5d6f88); }
```
